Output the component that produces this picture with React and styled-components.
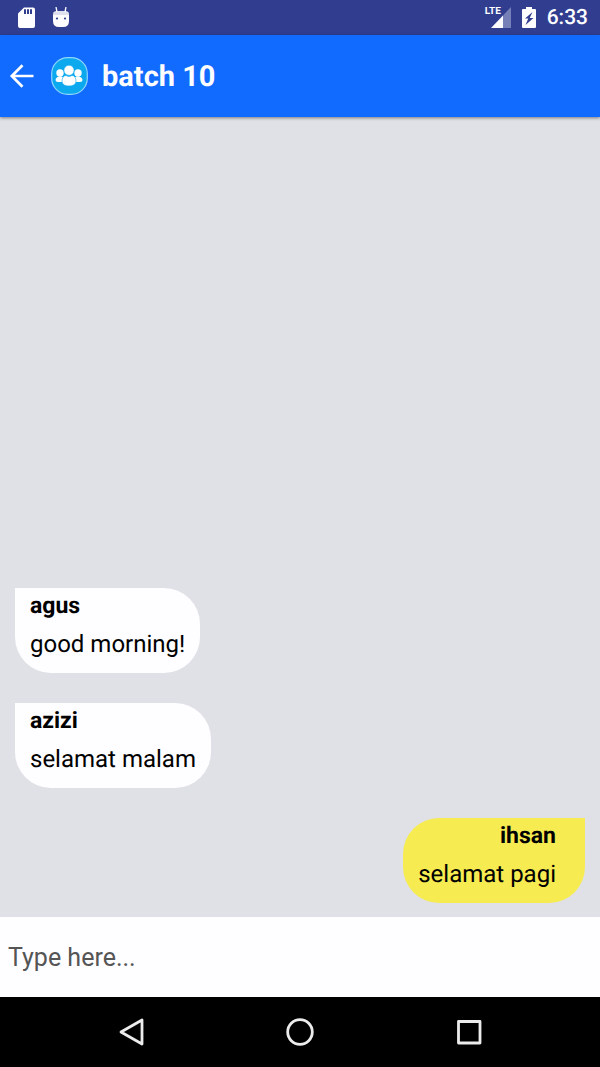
import React from "react";
import styled, { createGlobalStyle } from "styled-components";

const GlobalStyle = createGlobalStyle`
  * { box-sizing: border-box; }
  body { margin: 0; font-family: Roboto, "Noto Sans", sans-serif; text-rendering: geometricPrecision; }
`;

const Screen = styled.div`
  display: flex;
  flex-direction: column;
  min-height: 100vh;
  background: #e0e1e6;
`;

const StatusBar = styled.div`
  display: flex;
  align-items: center;
  justify-content: space-between;
  height: 35px;
  padding: 0 12px 0 16px;
  background: #313e8f;
  color: #fdfdff;
`;

const StatusGroup = styled.div`
  display: flex;
  align-items: center;
  gap: ${(p) => p.$gap}px;
`;

const Signal = styled.div`
  position: relative;
  display: flex;
  padding-left: 6px;
`;

const NetworkLabel = styled.span`
  position: absolute;
  left: 0;
  top: -1px;
  font: bold 10px/12px "Liberation Sans Narrow", Roboto, sans-serif;
`;

const Time = styled.time`
  font-size: 21px;
  line-height: 24px;
  font-weight: 500;
`;

const Header = styled.header`
  position: relative;
  display: flex;
  align-items: center;
  height: 82px;
  padding: 0 8px;
  background: #116bfe;
  color: #fdfdff;
  box-shadow: 0 1px 3px rgba(0, 0, 0, 0.45);
`;

const IconButton = styled.button`
  display: flex;
  align-items: center;
  justify-content: center;
  padding: 0;
  border: 0;
  background: none;
  color: inherit;
`;

const Avatar = styled.svg`
  flex: none;
  margin: 0 14px 0 15px;
`;

const Title = styled.h1`
  margin: 0;
  padding-top: 2px;
  font-size: 29px;
  line-height: 34px;
  font-weight: 700;
`;

const Messages = styled.main`
  flex: 1;
  display: flex;
  flex-direction: column;
  justify-content: flex-end;
  gap: 30px;
  padding: 14px 15px;
`;

const Bubble = styled.article`
  align-self: ${(p) => (p.$own ? "flex-end" : "flex-start")};
  padding: ${(p) => (p.$own ? "0 29px 15px 15px" : "0 15px 15px")};
  border-radius: ${(p) => (p.$own ? "36px 0 36px 36px" : "0 36px 36px 36px")};
  background: ${(p) => (p.$own ? "#f6eb50" : "#fefdff")};
  text-align: ${(p) => (p.$own ? "right" : "left")};
  color: #000;
`;

const Sender = styled.div`
  font-size: 23px;
  line-height: 36px;
  font-weight: 700;
`;

const Body = styled.p`
  margin: 6px 0 0;
  font-size: 24px;
  line-height: 28px;
`;

const Composer = styled.input`
  width: 100%;
  height: 80px;
  padding: 0 8px;
  border: 0;
  outline: 0;
  border-radius: 0;
  background: #fefdff;
  font-family: inherit;
  font-size: 25px;
  color: #000;
  &::placeholder { color: #555; opacity: 1; }
`;

const NavBar = styled.nav`
  display: flex;
  align-items: center;
  justify-content: center;
  gap: 128px;
  height: 70px;
  background: #000;
  color: #ececec;
`;

const messages = [
  { sender: "agus", text: "good morning!" },
  { sender: "azizi", text: "selamat malam" },
  { sender: "ihsan", text: "selamat pagi", own: true },
];

const SdCardIcon = () => (
  <svg width="20" height="22" viewBox="0 0 20 22" aria-hidden="true">
    <path fill="currentColor" fillRule="evenodd" d="M8 .5H17Q19 .5 19 2.5V19Q19 21 17 21H4Q2 21 2 19V6.5ZM8 2.3V7H10V2.3ZM11 2.3V7H13V2.3ZM14 2.3V7H16V2.3Z" />
  </svg>
);

const DroidIcon = () => (
  <svg width="18" height="22" viewBox="0 0 18 22" aria-hidden="true">
    <path d="M4 0L5 5M14 0L13 5" stroke="currentColor" strokeWidth="1.3" />
    <path fill="currentColor" d="M1 7Q1 4 5 4H13Q17 4 17 7V8H1Z" opacity=".85" />
    <path fill="currentColor" d="M1 8H17V14Q17 20 11 20H7Q1 20 1 14Z" />
    <circle cx="5" cy="11.5" r="1.1" fill="#313e8f" />
    <circle cx="13" cy="11.5" r="1.1" fill="#313e8f" />
  </svg>
);

const SignalIcon = () => (
  <svg width="20" height="21" viewBox="0 0 20 21" aria-hidden="true">
    <path fill="#7680b6" d="M20 0V21H12V8.5Z" />
    <path fill="currentColor" d="M12 8.5V21H0Z" />
  </svg>
);

const BatteryIcon = () => (
  <svg width="14" height="21" viewBox="0 0 14 21" aria-hidden="true">
    <path fill="currentColor" d="M4 0H10V2H13Q14 2 14 3V20Q14 21 13 21H1Q0 21 0 20V3Q0 2 1 2H4Z" />
    <path fill="#313e8f" d="M10.5 5L3 11.5H6.3L3.5 18L11.5 11H7.7Z" />
  </svg>
);

const BackIcon = () => (
  <svg width="28" height="28" viewBox="0 0 28 28" fill="none" stroke="currentColor" strokeWidth="2.7" aria-hidden="true">
    <path d="M25.5 14H4M14.5 3.2L3.8 14L14.5 24.8" />
  </svg>
);

const GroupAvatar = () => (
  <Avatar width="37" height="38" viewBox="0 0 37 38" role="img" aria-label="Group">
    <rect x=".7" y=".7" width="35.6" height="36.6" rx="16" fill="#0da9ef" stroke="#8ed5fa" strokeWidth="1.2" />
    <g fill="#fff">
      <circle cx="9" cy="16" r="3.7" />
      <circle cx="27" cy="16" r="3.7" />
      <path d="M4.5 23Q5 19.5 9 19.5T14 22V25H7Q4.5 25 4.5 23ZM31.5 23Q31 19.5 27 19.5T22 22V25H29Q31.5 25 31.5 23Z" />
    </g>
    <g fill="#fff" stroke="#0da9ef" strokeWidth=".6">
      <circle cx="18" cy="13.3" r="5.1" />
      <path d="M11 25Q11 18.5 15 18.5Q18 20.5 21 18.5Q25 18.5 25 25Q24 29 18 29T11 25Z" />
    </g>
  </Avatar>
);

const NavIcon = ({ children }) => (
  <svg width="40" height="40" viewBox="0 0 40 40" fill="none" stroke="currentColor" strokeWidth="2.8" strokeLinejoin="round" aria-hidden="true">
    {children}
  </svg>
);

export default function App() {
  return (
    <Screen>
      <GlobalStyle />
      <StatusBar>
        <StatusGroup $gap={16}>
          <SdCardIcon />
          <DroidIcon />
        </StatusGroup>
        <StatusGroup $gap={11}>
          <Signal>
            <SignalIcon />
            <NetworkLabel>LTE</NetworkLabel>
          </Signal>
          <BatteryIcon />
          <Time>6:33</Time>
        </StatusGroup>
      </StatusBar>
      <Header>
        <IconButton type="button" aria-label="Back">
          <BackIcon />
        </IconButton>
        <GroupAvatar />
        <Title>batch 10</Title>
      </Header>
      <Messages>
        {messages.map((m) => (
          <Bubble key={m.sender} $own={m.own}>
            <Sender>{m.sender}</Sender>
            <Body>{m.text}</Body>
          </Bubble>
        ))}
      </Messages>
      <Composer type="text" placeholder="Type here..." aria-label="Message" />
      <NavBar>
        <IconButton type="button" aria-label="Back">
          <NavIcon>
            <path d="M30 8V32L9 20Z" />
          </NavIcon>
        </IconButton>
        <IconButton type="button" aria-label="Home">
          <NavIcon>
            <circle cx="20" cy="20" r="12.3" />
          </NavIcon>
        </IconButton>
        <IconButton type="button" aria-label="Recent apps">
          <NavIcon>
            <rect x="10.5" y="9.5" width="21.5" height="21.5" />
          </NavIcon>
        </IconButton>
      </NavBar>
    </Screen>
  );
}
